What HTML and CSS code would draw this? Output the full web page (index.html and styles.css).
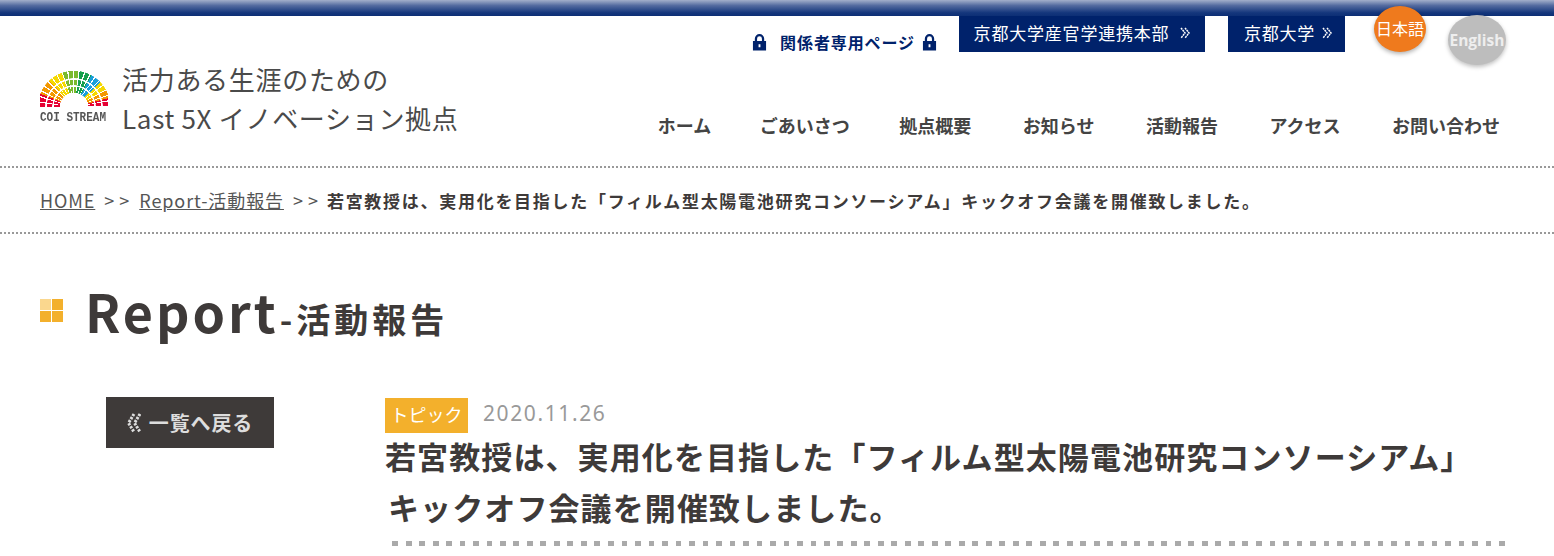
FILE: index.html
```html
<!DOCTYPE html>
<html lang="ja">
<head>
    <meta charset="UTF-8">
    <title>Report-活動報告</title>
    <link rel="stylesheet" href="styles.css">
</head>
<body>
    <div class="top-band"></div>

    <header class="site-header">
        <div class="brand">
            <div class="logo">
                <div class="logo-arc"></div>
                <div class="logo-name">COI STREAM</div>
            </div>
            <p class="brand-title">活力ある生涯のための<br>Last 5X イノベーション拠点</p>
        </div>

        <div class="header-right">
            <div class="util-nav">
                <a class="member-link">
                    <svg class="lock" viewBox="0 0 16 18"><path d="M3 8V5.5a5 5 0 0 1 10 0V8h-2.4V5.5a2.6 2.6 0 0 0-5.2 0V8z"/><path d="M1 8h14v10H1zM7 11.5v3h2v-3z" fill-rule="evenodd"/></svg>
                    <span>関係者専用ページ</span>
                    <svg class="lock" viewBox="0 0 16 18"><path d="M3 8V5.5a5 5 0 0 1 10 0V8h-2.4V5.5a2.6 2.6 0 0 0-5.2 0V8z"/><path d="M1 8h14v10H1zM7 11.5v3h2v-3z" fill-rule="evenodd"/></svg>
                </a>
                <a class="navy-btn btn-wide">京都大学産官学連携本部<svg class="chev" viewBox="0 0 10 12"><path d="M1 1l4 5-4 5M5 1l4 5-4 5"/></svg></a>
                <a class="navy-btn btn-short">京都大学<svg class="chev" viewBox="0 0 10 12"><path d="M1 1l4 5-4 5M5 1l4 5-4 5"/></svg></a>
                <a class="lang lang-ja">日本語</a>
                <a class="lang lang-en">English</a>
            </div>
            <nav class="main-nav">
                <a>ホーム</a>
                <a>ごあいさつ</a>
                <a>拠点概要</a>
                <a>お知らせ</a>
                <a>活動報告</a>
                <a>アクセス</a>
                <a>お問い合わせ</a>
            </nav>
        </div>
    </header>

    <div class="breadcrumb">
        <a>HOME</a><span class="crumb-sep">&gt;&gt;</span><a>Report-活動報告</a><span class="crumb-sep">&gt;&gt;</span><strong>若宮教授は、実用化を目指した「フィルム型太陽電池研究コンソーシアム」キックオフ会議を開催致しました。</strong>
    </div>

    <h2 class="page-title">
        <span class="title-mark"><i></i><i></i><i></i><i></i></span>
        <span class="title-en">Report</span><span class="title-ja">-活動報告</span>
    </h2>

    <main class="report">
        <div class="report-side">
            <a class="back-btn"><svg class="back-arrow" viewBox="0 0 14 20"><path d="M7 1L1.5 10 7 19M13 1L7.5 10 13 19"/></svg>一覧へ戻る</a>
        </div>
        <article class="report-body">
            <div class="report-meta">
                <span class="tag">トピック</span>
                <span class="date">2020.11.26</span>
            </div>
            <h3 class="report-title">若宮教授は、実用化を目指した「フィルム型太陽電池研究コンソーシアム」<br><span class="title-line2">キックオフ会議を開催致しました。</span></h3>
            <div class="report-rule"></div>
        </article>
    </main>
</body>
</html>
```

FILE: styles.css
```css
:root {
    --navy: #00226b;
    --text-color: #3e3a39;
    --yellow: #f3b02c;
}

html, body {
    height: 556px;
    overflow: hidden;
}

body {
    margin: 0;
    background: #fff;
    color: var(--text-color);
    font-family: "Noto Sans CJK JP", "Noto Sans", sans-serif;
}

p, h2, h3 { margin: 0; }

.top-band {
    height: 16px;
    background: linear-gradient(#a3afcb, #536a9f 35%, #14367c 80%, #0d2f75);
}

/* --- header --- */
.site-header {
    display: flex;
    justify-content: space-between;
    height: 150px;
    padding: 0 54px 0 40px;
    border-bottom: 2px dotted #999;
}

.brand {
    display: flex;
    align-items: flex-start;
    gap: 14px;
    padding-top: 43px;
}

.logo { width: 68px; margin-top: 12px; }

.logo-arc {
    width: 68px;
    height: 36px;
    background: conic-gradient(from -90deg at 50% 100%,
        #e60033 0 6%, #f39800 6% 13%, #f5d800 13% 20%, #7ab92d 20% 27%, #16a04c 27% 33%, #1a9fd9 33% 38%,
        #f5d800 38% 42%, #f39800 42% 46%, #e60033 46% 50%, #a5248c 50% 55%, #2a6fc0 55% 62%, #16a04c 62% 69%,
        #b6d02b 69% 76%, #f5d800 76% 83%, #f39800 83% 90%, #e60033 90% 100%);
    -webkit-mask:
        radial-gradient(circle at 50% 100%, transparent 14px, #000 14.5px 20px, transparent 20.5px 21.5px, #000 22px 27px, transparent 27.5px 28.5px, #000 29px 36px, transparent 36.5px),
        repeating-conic-gradient(from -90deg at 50% 100%, #000 0 7deg, transparent 7deg 9deg);
    -webkit-mask-composite: source-in;
    mask-composite: intersect;
}

.logo-name {
    margin-top: 3px;
    font: 700 11px/14px "Liberation Mono", monospace;
    color: #555;
    white-space: nowrap;
    transform: scaleY(1.2);
}

.brand-title {
    font-size: 26px;
    line-height: 39px;
    letter-spacing: .7px;
    color: #4a4a4a;
    white-space: nowrap;
}

.header-right {
    display: flex;
    flex-direction: column;
    align-items: flex-end;
}

.util-nav {
    display: flex;
    align-items: flex-start;
    margin-right: -6px;
}

.member-link {
    display: flex;
    align-items: center;
    gap: 13px;
    margin: 15px 22px 0 0;
    color: var(--navy);
    font-size: 16px;
    font-weight: 700;
    line-height: 22px;
    white-space: nowrap;
}

.member-link span { margin-right: -6px; letter-spacing: .9px; }

.lock {
    width: 15px;
    height: 18px;
    fill: var(--navy);
}

.navy-btn {
    display: flex;
    align-items: center;
    justify-content: center;
    gap: 11px;
    height: 36px;
    padding-bottom: 3px;
    box-sizing: border-box;
    background: var(--navy);
    color: #fff;
    font-size: 17px;
    letter-spacing: .8px;
    white-space: nowrap;
}

.btn-wide { width: 246px; margin-right: 23px; }
.btn-short { width: 117px; margin-right: 29px; padding-left: 3px; gap: 7px; }

.chev {
    width: 10px;
    height: 12px;
    fill: none;
    stroke: #fff;
    stroke-width: 1.5;
    stroke-dasharray: 2 .6;
}

.lang {
    display: flex;
    align-items: center;
    justify-content: center;
    border-radius: 50%;
    white-space: nowrap;
}

.lang-ja {
    width: 52px;
    height: 46px;
    margin: -10px 22px 0 0;
    padding-bottom: 2px;
    box-sizing: border-box;
    background: #ef7a1d;
    box-shadow: 0 2px 4px rgba(0, 0, 0, .3);
    color: #fff;
    font-size: 16px;
}

.lang-en {
    width: 58px;
    height: 50px;
    margin-top: -1px;
    background: #bdbdbd;
    box-shadow: 0 2px 4px rgba(0, 0, 0, .25);
    color: #eee;
    font-size: 15.5px;
    font-weight: 700;
    font-family: "Open Sans", sans-serif;
}

.main-nav {
    display: flex;
    gap: 51.5px;
    margin-top: 47px;
    font-size: 18px;
    font-weight: 700;
    line-height: 26px;
    color: #444;
    white-space: nowrap;
}

.main-nav a:nth-child(1) { margin-right: -3px; }
.main-nav a:nth-child(2) { margin-right: -2px; }

/* --- breadcrumb --- */
.breadcrumb {
    display: flex;
    align-items: baseline;
    gap: 9px;
    height: 64px;
    padding-left: 40px;
    border-bottom: 2px dotted #999;
    color: #555;
    font-size: 18px;
    line-height: 64px;
    letter-spacing: .9px;
    white-space: nowrap;
}

.breadcrumb a { text-decoration: underline; }
.crumb-sep { letter-spacing: 5px; margin-right: -4px; }
.breadcrumb strong { color: var(--text-color); font-size: 17px; letter-spacing: 1.72px; margin-left: -1px; }

/* --- page title --- */
.page-title {
    display: flex;
    align-items: baseline;
    height: 121px;
    margin-top: 42px;
    padding-left: 40px;
    line-height: 70px;
    white-space: nowrap;
}

.title-mark {
    display: grid;
    grid-template-columns: 11px 11px;
    gap: 1px;
    margin-right: 22px;
    align-self: flex-start;
    margin-top: 23px;
}

.title-mark i { height: 11px; background: var(--yellow); }
.title-mark i:first-child { background: #fad78e; }

.title-en { font-size: 52px; letter-spacing: 3px; }
.title-ja { font-size: 34px; letter-spacing: 4px; margin-left: 1px; }

/* --- report --- */
.report {
    display: flex;
    padding: 0 48px 0 106px;
}

.report-side { width: 279px; flex: none; }

.back-btn {
    display: flex;
    align-items: center;
    justify-content: center;
    gap: 8px;
    width: 168px;
    height: 51px;
    background: var(--text-color);
    color: #ddd;
    font-size: 20px;
    font-weight: 700;
    letter-spacing: .9px;
    white-space: nowrap;
}

.back-arrow {
    width: 14px;
    height: 20px;
    fill: none;
    stroke: #ddd;
    stroke-width: 3;
    stroke-dasharray: 2.4 1.2;
}

.report-body { flex: 1; min-width: 0; padding-top: 1px; }

.report-meta {
    display: flex;
    align-items: center;
    gap: 15px;
}

.tag {
    width: 83px;
    height: 35px;
    background: var(--yellow);
    color: #fff;
    font-size: 18px;
    line-height: 33px;
    text-align: center;
    white-space: nowrap;
}

.date {
    margin-top: -5px;
    color: #999;
    font-size: 21px;
    letter-spacing: 1.6px;
    font-family: "Noto Sans", sans-serif;
}

.report-title {
    margin-top: -3px;
    font-size: 31px;
    line-height: 51px;
    letter-spacing: 1.1px;
    white-space: nowrap;
}

.title-line2 { margin-left: 3px; }

.report-rule {
    height: 5px;
    margin-top: 9px;
    background: repeating-linear-gradient(90deg, transparent 0 7px, #aaa 7px 13px, transparent 13px 13.5px);
}
```
